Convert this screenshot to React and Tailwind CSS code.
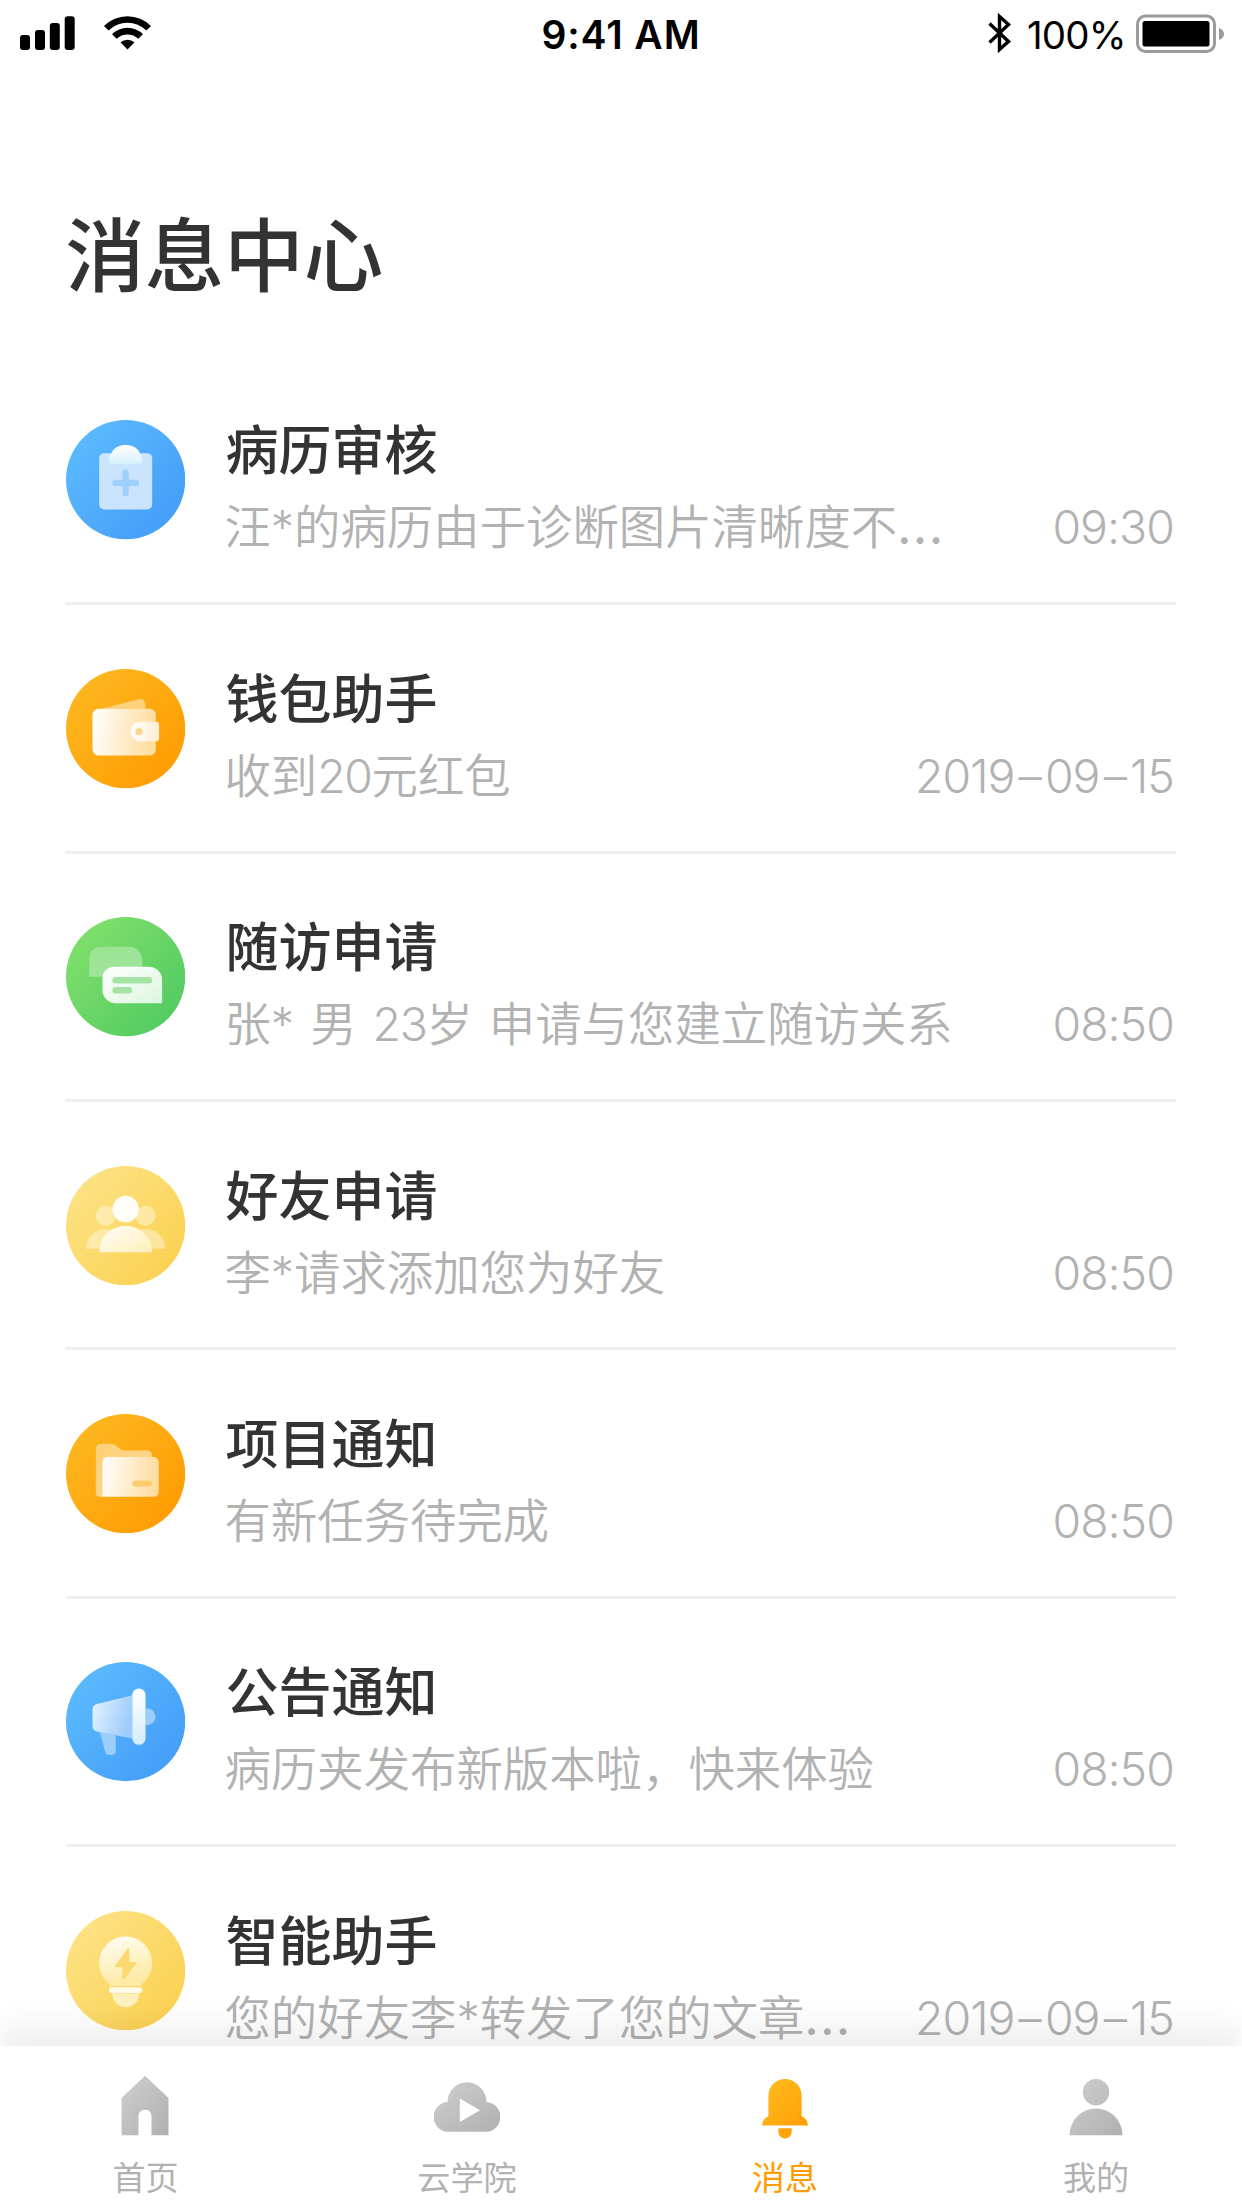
const MESSAGES = [
  { icon: ClipboardIcon, title: "病历审核", text: "汪*的病历由于诊断图片清晰度不...", time: "09:30" },
  { icon: WalletIcon, title: "钱包助手", text: "收到20元红包", time: "2019–09–15" },
  { icon: ChatIcon, title: "随访申请", text: "张* 男 23岁 申请与您建立随访关系", time: "08:50" },
  { icon: FriendsIcon, title: "好友申请", text: "李*请求添加您为好友", time: "08:50" },
  { icon: FolderIcon, title: "项目通知", text: "有新任务待完成", time: "08:50" },
  { icon: HornIcon, title: "公告通知", text: "病历夹发布新版本啦，快来体验", time: "08:50" },
  { icon: BulbIcon, title: "智能助手", text: "您的好友李*转发了您的文章...", time: "2019–09–15" },
];

function Fade({ id, from, to, a = 1, b = 1, x2 = 1, y2 = 1 }) {
  return (
    <linearGradient id={id} x1="0" y1="0" x2={x2} y2={y2}>
      <stop offset="0" stopColor={from} stopOpacity={a} />
      <stop offset="1" stopColor={to} stopOpacity={b} />
    </linearGradient>
  );
}

function Disc({ id, from, to, children }) {
  return (
    <svg viewBox="0 0 36 36" className="size-[119.3px] shrink-0">
      <defs>
        <linearGradient id={id} x1="0.1" y1="0.15" x2="0.9" y2="0.85">
          <stop offset="0" stopColor={from} />
          <stop offset="1" stopColor={to} />
        </linearGradient>
      </defs>
      <circle cx="18" cy="18" r="18" fill={`url(#${id})`} />
      {children}
    </svg>
  );
}

function ClipboardIcon() {
  return (
    <Disc id="clip" from="#5abafd" to="#459df9">
      <Fade id="clip-cap" from="#fff" to="#d9f1fd" x2={0} />
      <rect x="10" y="10" width="16" height="17" rx="1.5" fill="#dcecfd" fillOpacity="0.88" />
      <path d="M13.500 10.300a4.700 4 0 0 1 9 0 2 2 0 0 1 .5 1.300v.8a.8.8 0 0 1-.8.8h-8.400a.8.8 0 0 1-.8-.8v-.8a2 2 0 0 1 .5-1.300Z" fill="url(#clip-cap)" />
      <path d="M18 15.9v6.2M14.9 19h6.2" stroke="#9fd0fc" strokeWidth="1.9" strokeLinecap="round" />
    </Disc>
  );
}

function WalletIcon() {
  return (
    <Disc id="wal" from="#fdb71f" to="#ff9c03">
      <Fade id="wal-body" from="#fff" to="#fedda0" y2={0.1} />
      <Fade id="wal-clasp" from="#fff" to="#ffeed2" y2={0} />
      <path d="M10.6 12 22 9.1q1.6-.3 1.9 1.4l.2 1.5Z" fill="#fed27c" />
      <rect x="8" y="12" width="19.1" height="14.1" rx="1.9" fill="url(#wal-body)" />
      <path d="M22 15.9h5.2a.9.9 0 0 1 .9.9v4.1a.9.9 0 0 1-.9.9H22a3 3 0 0 1 0-5.9Z" fill="url(#wal-clasp)" />
      <circle cx="22" cy="18.9" r="1.1" fill="#fed68b" />
    </Disc>
  );
}

function ChatIcon() {
  return (
    <Disc id="chat" from="#7fdf6b" to="#53cb62">
      <Fade id="chat-back" from="#fff" to="#fff" a={0.25} b={0.4} />
      <Fade id="chat-front" from="#fff" to="#dcf5df" />
      <path d="M7 18v-5.5A3.5 3.5 0 0 1 10.500 9H19a4 4 0 0 1 4 4v5Z" fill="url(#chat-back)" />
      <path d="M29 26H15a4 4 0 0 1-4-4v-3.500A3.500 3.500 0 0 1 14.500 15H25a4 4 0 0 1 4 4Z" fill="url(#chat-front)" />
      <path d="M15 19.100h10M15 22.100h4" stroke="#a5e3a5" strokeWidth="2" strokeLinecap="round" />
    </Disc>
  );
}

function FriendsIcon() {
  return (
    <Disc id="fri" from="#fde284" to="#fbd152">
      <Fade id="fri-front" from="#fffef8" to="#fef0bb" />
      <g fill="#fff" fillOpacity="0.4">
        <circle cx="12" cy="15" r="3" />
        <circle cx="24" cy="15" r="3" />
        <path d="M6 25a6 6 0 0 1 12 0ZM18 25a6 6 0 0 1 12 0Z" />
      </g>
      <circle cx="18" cy="13" r="4" fill="#fffdf5" />
      <path d="M10 26a8 8 0 0 1 16 0Z" fill="url(#fri-front)" />
    </Disc>
  );
}

function FolderIcon() {
  return (
    <Disc id="fold" from="#fdb71f" to="#ff9c03">
      <Fade id="fold-front" from="#fff" to="#fedda0" y2={0.1} />
      <Fade id="fold-back" from="#fed078" to="#fed694" />
      <path d="M9 10.500A1.500 1.500 0 0 1 10.500 9h3.300q.8 0 1.400.6l1 .9q.6.500 1.400.5h6.900a1.500 1.500 0 0 1 1.500 1.500V20l-15 5h-.8A1.200 1.200 0 0 1 9 23.800Z" fill="url(#fold-back)" />
      <path d="M11 25V14.500A1.500 1.500 0 0 1 12.500 13h14a1.500 1.500 0 0 1 1.500 1.500v9a1.500 1.500 0 0 1-1.500 1.500Z" fill="url(#fold-front)" />
      <path d="M21 21h4" stroke="#fdcb70" strokeWidth="1.900" strokeLinecap="round" />
    </Disc>
  );
}

function HornIcon() {
  return (
    <Disc id="horn" from="#5abafd" to="#459df9">
      <Fade id="horn-cone" from="#e6f3fe" to="#9fcdfb" y2={0.3} />
      <Fade id="horn-bar" from="#fff" to="#d3edfd" x2={0} />
      <path d="M10.100 21 15 22.100v4.900a1 1 0 0 1-1 1h-1.100a1 1 0 0 1-1-.8Z" fill="#9ccefc" />
      <path d="M24 14h.500a2.500 2.500 0 0 1 0 5H24Z" fill="#9ccefc" />
      <path d="M9.400 12.700 20 10v13.100L9.400 21A1.800 1.800 0 0 1 8 19.300v-4.900a1.800 1.800 0 0 1 1.400-1.700Z" fill="url(#horn-cone)" />
      <rect x="20" y="8" width="4" height="17" rx="2" fill="url(#horn-bar)" />
    </Disc>
  );
}

function BulbIcon() {
  return (
    <Disc id="bulb" from="#fde284" to="#fbd152">
      <Fade id="bulb-glass" from="#fffefa" to="#feeaa4" x2={0.3} />
      <path d="M13.300 22.600q-.2-.6-.8-1.100a8 8 0 1 1 11 0q-.6.500-.8 1.100Z" fill="url(#bulb-glass)" />
      <path d="M18.700 11.200 14.600 16.900H17v3.700q.3.300.7-.1L21.500 15.400H19.100v-4.100q-.2-.3-.4-.1Z" fill="#fbd970" />
      <rect x="13" y="23" width="10" height="1.800" rx="0.9" fill="#fffaea" />
      <path d="M14 25h8a4 4 0 0 1-8 0Z" fill="#fef0c0" />
    </Disc>
  );
}

function StatusBar() {
  return (
    <div className="grid grid-cols-3 h-[70px] shrink-0 pl-5 pr-[18px] text-black">
      <div className="flex items-start gap-[29px] pt-4">
        <svg viewBox="0 0 55 34" className="w-[55px] h-[34px]">
          <rect x="0" y="19" width="10" height="15" rx="3" />
          <rect x="15" y="14" width="10" height="20" rx="3" />
          <rect x="29.800" y="7" width="10" height="27" rx="3" />
          <rect x="44.700" y="0.300" width="10" height="33.700" rx="3" />
        </svg>
        <svg viewBox="0 0 47 34" className="w-[47px] h-[34px]">
          <path d="M0 10a33 33 0 0 1 47 0l-4.600 4.600a26.700 26.700 0 0 0-37.800 0Z" />
          <path d="M8 18.200a22 22 0 0 1 31 0l-4.700 4.600a15.500 15.500 0 0 0-21.600 0Z" />
          <path d="M16.500 26.300a10.500 10.500 0 0 1 14 0l-7 7.200Z" />
        </svg>
      </div>
      <div className="pr-[2px] text-center text-[39px] leading-[70px] font-semibold tracking-[0.9px]">9:41 AM</div>
      <div className="flex items-start justify-end pt-[13px]">
        <svg viewBox="0 0 23 40" className="w-[23px] h-10" fill="none" stroke="#000" strokeWidth="3.400">
          <path d="M1.500 10.500 20.500 28.500 11.500 36.500V3.500L20.500 11.500 1.500 29.500" />
        </svg>
        <span className="ml-4 w-[99px] whitespace-nowrap text-[38.5px] leading-[44px] tracking-[-0.8px]">100%</span>
        <svg viewBox="0 0 88 40" className="ml-[10px] w-[88px] h-10">
          <rect x="1.500" y="3" width="77" height="35.500" rx="8" fill="none" stroke="#9b9b9b" strokeWidth="3" />
          <rect x="6.500" y="8" width="67" height="25.500" rx="2.500" />
          <path d="M83 15q5 2 5 6t-5 6Z" fill="#9b9b9b" />
        </svg>
      </div>
    </div>
  );
}

// digits sit a little tighter than the CJK text, the trailing dots a little wider
function Preview({ text }) {
  return (
    <p className="-ml-px [word-spacing:3px]">
      {text.split(/(\d+|\.{3})/).map((part, i) => {
        if (part === "...") return <span key={i} className="tracking-[1.8px] font-medium">{part}</span>;
        if (/^\d/.test(part)) return <span key={i} className="tracking-[-1.4px]">{part}</span>;
        return part;
      })}
    </p>
  );
}

function Time({ value }) {
  return (
    <time className="mr-[2px] tracking-[-1px]">
      {value.split(/(–)/).map((part, i) =>
        part === "–" ? <span key={i} className="mx-[4.2px]">{part}</span> : part
      )}
    </time>
  );
}

function MessageRow({ icon: Icon, title, text, time }) {
  return (
    <li className="flex h-[248.4px] items-start border-b-[3px] border-[#f0f0f0] pt-[63.6px]">
      <Icon />
      <div className="ml-10 flex-1 min-w-0">
        <h2 className="mt-px text-[53px] leading-[60px] font-medium text-[#333]">{title}</h2>
        <div className="mt-4 flex items-center justify-between whitespace-nowrap text-[46.4px] leading-[60px] font-[350] text-[#b2b2b2]">
          <Preview text={text} />
          <Time value={time} />
        </div>
      </div>
    </li>
  );
}

function Tab({ label, active, className, children }) {
  return (
    <div className={`flex flex-col items-center ${className}`}>
      <svg viewBox="0 0 66 66" className="mt-[27.3px] size-[66px]" fill={active ? "url(#tab-on)" : "url(#tab-off)"}>
        {children}
      </svg>
      <span className={`mt-[15.5px] text-[33.1px] leading-[46px] whitespace-nowrap ${active ? "text-[#ff9c00]" : "text-[#b2b2b2]"}`}>
        {label}
      </span>
    </div>
  );
}

function TabBar() {
  return (
    <nav className="relative z-10 flex h-[162.3px] shrink-0 bg-white pl-[112.4px] shadow-[0_-20px_28px_rgba(0,0,0,0.065)]">
      <svg className="absolute size-0">
        <defs>
          <Fade id="tab-off" from="#cfcfcf" to="#b0b0b0" />
          <Fade id="tab-on" from="#ffbf20" to="#ff9900" />
        </defs>
      </svg>
      <Tab label="首页" className="w-[66.2px]">
        <path d="M33 2.700 56.500 25v37.300h-17V42.500a6.600 7 0 0 0-13 0v19.800h-17V25Z" />
      </Tab>
      <Tab label="云学院" className="ml-[238.7px] w-[99.4px]">
        <path fillRule="evenodd" d="M13.500 29a19.500 19.800 0 0 1 39 0 14.900 14.900 0 0 1-2 29.800h-35a14.900 14.900 0 0 1-2-29.800ZM25.800 25.500V49L46 37.200Z" />
      </Tab>
      <Tab label="消息" active className="ml-[235.2px] w-[66.2px]">
        <path d="M33 6a16.600 16.600 0 0 1 16.600 16.600V43q6 3 6.400 9.500H10q.4-6.500 6.400-9.500V22.600A16.600 16.600 0 0 1 33 6ZM26.300 55.300h13.400v3.500a6.700 6.700 0 0 1-13.400 0Z" />
      </Tab>
      <Tab label="我的" className="ml-[245px] w-[66.2px]">
        <path d="M33 6a13.200 13.200 0 1 1 0 26.400A13.200 13.200 0 0 1 33 6ZM6.500 62.300a26.500 26.800 0 0 1 53 0Z" />
      </Tab>
    </nav>
  );
}

export default function App() {
  return (
    <div className="flex h-[2208px] w-[1242px] flex-col overflow-hidden bg-white font-['Inter','Noto_Sans_CJK_SC',sans-serif]">
      <StatusBar />
      <header className="h-[286.9px] shrink-0 px-[66.2px] pt-[136px]">
        <h1 className="-ml-px text-[79.5px] leading-[100px] font-medium text-[#333]">消息中心</h1>
      </header>
      <ul className="min-h-0 flex-1 overflow-hidden px-[66.2px]">
        {MESSAGES.map((m) => (
          <MessageRow key={m.title} {...m} />
        ))}
      </ul>
      <TabBar />
    </div>
  );
}
